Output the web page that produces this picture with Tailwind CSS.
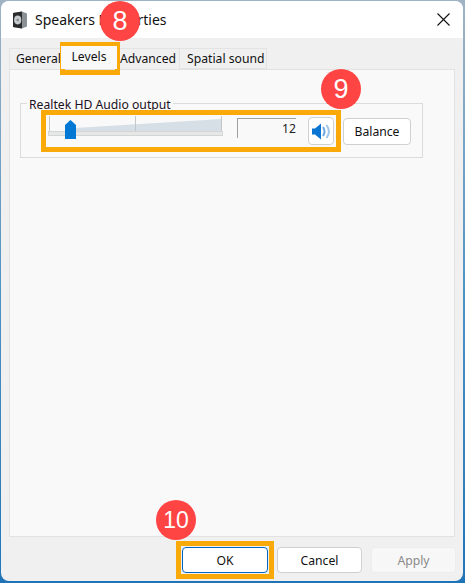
<!DOCTYPE html>
<html lang="en">
<head>
  <meta charset="UTF-8">
  <title>Speakers Properties</title>
  <script src="https://cdn.jsdelivr.net/npm/@tailwindcss/browser@4"></script>
</head>
<body class="relative w-[465px] h-[583px] overflow-hidden bg-gradient-to-b from-[#9fb3c4] via-[#4c93c4] to-[#1f74b8] pl-px pt-px font-['Noto_Sans',sans-serif] text-[12.2px] text-[#111]">

  <div class="flex flex-col w-[462px] h-[580px] rounded-lg overflow-hidden bg-[#f0f0f0]">
    <!-- title bar -->
    <div class="flex items-center h-[37px] bg-white shrink-0 pl-[11px] pr-[13px]">
      <svg width="16" height="18" viewBox="0 0 16 18" class="shrink-0">
        <path d="M1 2 L10 0.5 L15 2.5 L15 15.5 L10 17.5 L1 16 Z" fill="#8b9094"/>
        <path d="M1 2 L10 0.5 V17.5 L1 16 Z" fill="#2b2b2b"/>
        <ellipse cx="5.7" cy="9" rx="3.6" ry="4.4" fill="#c4cacd"/>
        <circle cx="5.7" cy="9" r="1.3" fill="#868c90"/>
      </svg>
      <span class="ml-[7px] text-[14px] text-[#111]">Speakers Properties</span>
      <svg width="13" height="13" viewBox="0 0 13 13" class="ml-auto"><path d="M.5.5l12 12M12.5.5l-12 12" stroke="#111" stroke-width="1.1" fill="none"/></svg>
    </div>

    <!-- tabs -->
    <div class="flex pl-[8px] pt-[10px] h-[31px] shrink-0 leading-[20px]">
      <div class="w-[52px] border border-b-0 border-[#e3e3e3] pl-[6px]">General</div>
      <div class="w-[56px] mt-[-2px] h-[23px] bg-[#f9f9f9] text-center z-10 pt-px">Levels</div>
      <div class="w-[63px] border border-b-0 border-[#e3e3e3] pl-[2px]">Advanced</div>
      <div class="w-[87px] border-y border-r border-[#e3e3e3] pl-[7px]">Spatial sound</div>
    </div>

    <!-- panel -->
    <div class="ml-[8px] w-[446px] h-[468px] border border-[#e2e2e2] bg-[#f9f9f9] pl-[10px] pt-[33px] shrink-0">
      <div class="relative w-[403px] h-[55px] border border-[#dcdcdc]">
        <span class="absolute left-[6px] top-[-7px] bg-[#f9f9f9] px-[2px] leading-[16px] text-[#1a1020]">Realtek HD Audio output</span>
        <div class="flex items-start pt-[12px] pl-[27px]">
          <!-- slider -->
          <svg width="176" height="26" viewBox="0 0 176 26" class="shrink-0">
            <path d="M27 12 L174 3 V15 H27 Z" fill="#d6dee6"/>
            <path d="M1.5 0V15M87.5 0V15M173.5 0V15" stroke="#c4c6c8" fill="none"/>
            <rect x="0.5" y="15.5" width="174" height="4" fill="#e6e8e8" stroke="#d4d6d6"/>
            <path d="M17 9 L22.5 4 L28 9 V23 H17 Z" fill="#0078d4"/>
          </svg>
          <div class="ml-[13px] mt-[2px] w-[59px] h-[20px] border-l border-t border-[#a0a0a0] text-right leading-[20px] text-[#222]">12</div>
          <div class="flex items-center justify-center ml-[12px] mt-px w-[26px] h-[28px] rounded-[4px] border border-[#d0d0d0] bg-white">
            <svg width="18" height="17" viewBox="0 0 18 17">
              <path d="M0 5.5 H3 L9 0.5 V16.5 L3 11.5 H0 Z" fill="#0a74d2"/>
              <path d="M11 4 C13 7 13 10 11 13" fill="none" stroke="#6aa8e0" stroke-width="2"/>
              <path d="M14.5 2 C17.5 6 17.5 11 14.5 15" fill="none" stroke="#9cc6ea" stroke-width="2"/>
            </svg>
          </div>
          <div class="flex items-center justify-center ml-[9px] mt-[2px] w-[68px] h-[27px] rounded-[4px] border border-[#d0d0d0] bg-white pt-px">Balance</div>
        </div>
      </div>
    </div>

    <!-- footer buttons -->
    <div class="flex pl-[181px] pt-[10px]">
      <div class="flex items-center justify-center w-[86px] h-[26px] rounded-[4px] border border-[#0067c0] bg-white pt-[2px]">OK</div>
      <div class="flex items-center justify-center ml-[9px] w-[85px] h-[26px] rounded-[4px] border border-[#d0d0d0] bg-white pt-[2px]">Cancel</div>
      <div class="flex items-center justify-center ml-[9px] w-[85px] h-[26px] rounded-[4px] border border-[#ededed] bg-[#f7f7f7] text-[#8a8a8a] pt-[2px]">Apply</div>
    </div>
  </div>

  <!-- annotation overlays -->
  <div class="absolute left-[60px] top-[42px] w-[60px] h-[33px] border-[5px] border-[#f9a908]"></div>
  <div class="absolute left-[41px] top-[110px] w-[300px] h-[42px] border-[5px] border-[#f9a908]"></div>
  <div class="absolute left-[176px] top-[541px] w-[98px] h-[38px] border-[5px] border-[#f9a908]"></div>

  <div class="absolute left-[100px] top-[1px] w-10 h-10 rounded-full bg-[#ff4444] flex items-center justify-center text-white text-[27px] font-['Liberation_Sans',sans-serif]">8</div>
  <div class="absolute left-[321px] top-[69px] w-10 h-10 rounded-full bg-[#ff4444] flex items-center justify-center text-white text-[27px] font-['Liberation_Sans',sans-serif]">9</div>
  <div class="absolute left-[156px] top-[500px] w-10 h-10 rounded-full bg-[#ff4444] flex items-center justify-center text-white text-[23px] font-['Liberation_Sans',sans-serif]">10</div>

</body>
</html>
